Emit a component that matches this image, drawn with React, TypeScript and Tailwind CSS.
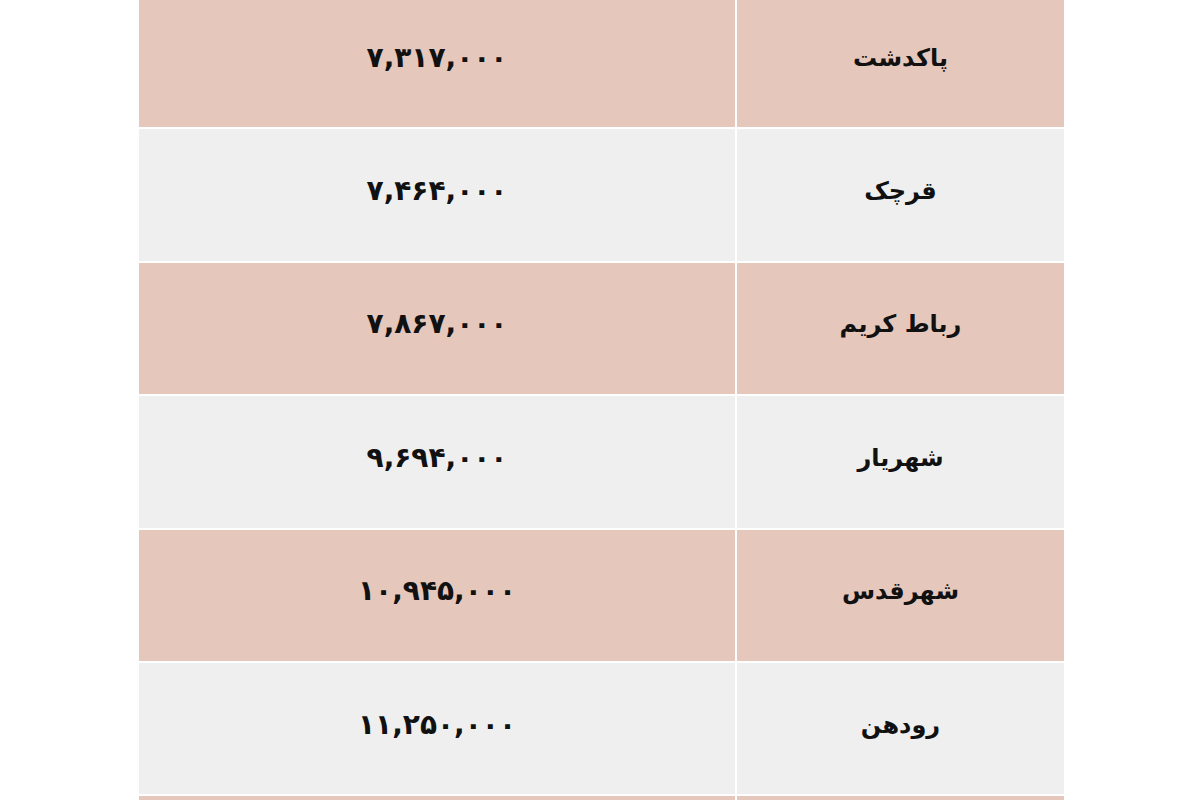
import React from "react";

const rows = [
  { name: "پاکدشت", price: "۷,۳۱۷,۰۰۰" },
  { name: "قرچک", price: "۷,۴۶۴,۰۰۰" },
  { name: "رباط کریم", price: "۷,۸۶۷,۰۰۰" },
  { name: "شهریار", price: "۹,۶۹۴,۰۰۰" },
  { name: "شهرقدس", price: "۱۰,۹۴۵,۰۰۰" },
  { name: "رودهن", price: "۱۱,۲۵۰,۰۰۰" },
  { name: "", price: "" },
];

export default function App() {
  return (
    <div className="w-[1200px] h-[800px] overflow-hidden bg-white">
      <div
        dir="rtl"
        className="ml-[139px] w-[925px] -mt-[4px] flex flex-col"
        style={{ fontFamily: '"DejaVu Sans", sans-serif' }}
      >
        {rows.map((r, i) => (
          <div
            key={i}
            className={`flex h-[133.4px] border-b-2 border-white ${
              i % 2 === 0 ? "bg-[#e5c7bc]" : "bg-[#efefef]"
            }`}
          >
            <div className="w-[329px] shrink-0 flex items-center justify-center pb-[8px] text-[24px] font-bold text-[#111] border-l-2 border-white">
              {r.name}
            </div>
            <div className="flex-1 flex items-center justify-center pb-[8px] text-[28px] font-bold text-[#111]">
              {r.price}
            </div>
          </div>
        ))}
      </div>
    </div>
  );
}
